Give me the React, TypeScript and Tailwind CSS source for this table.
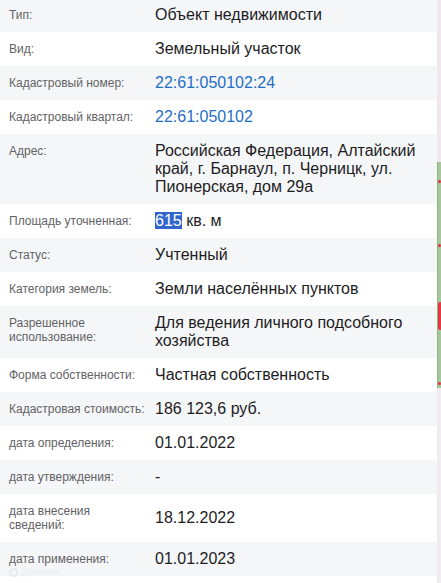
import type { ReactNode } from 'react'

type Row = {
  label: string
  value: ReactNode
}

const ROWS: Row[] = [
  { label: 'Тип:', value: 'Объект недвижимости' },
  { label: 'Вид:', value: 'Земельный участок' },
  {
    label: 'Кадастровый номер:',
    value: <span className="text-[#1f6fc5]">22:61:050102:24</span>,
  },
  {
    label: 'Кадастровый квартал:',
    value: <span className="text-[#1f6fc5]">22:61:050102</span>,
  },
  {
    label: 'Адрес:',
    value: 'Российская Федерация, Алтайский край, г. Барнаул, п. Черницк, ул. Пионерская, дом 29а',
  },
  {
    label: 'Площадь уточненная:',
    value: (
      <>
        <span className="bg-[#3366cc] text-white">615</span> кв. м
      </>
    ),
  },
  { label: 'Статус:', value: 'Учтенный' },
  { label: 'Категория земель:', value: 'Земли населённых пунктов' },
  { label: 'Разрешенное использование:', value: 'Для ведения личного подсобного хозяйства' },
  { label: 'Форма собственности:', value: 'Частная собственность' },
  { label: 'Кадастровая стоимость:', value: '186 123,6 руб.' },
  { label: 'дата определения:', value: '01.01.2022' },
  { label: 'дата утверждения:', value: '-' },
  { label: 'дата внесения сведений:', value: '18.12.2022' },
  { label: 'дата применения:', value: '01.01.2023' },
]

function MapStrip() {
  return (
    <div className="w-[4px] shrink-0 flex flex-col">
      <div className="h-[162px] bg-[#efe9ee]" />
      <div className="relative h-[226px] bg-[#a8c79c] border-l border-[#8fb487]">
        <span className="absolute left-0 top-[18px] w-[3px] h-[3px] rounded-full bg-[#e0303a]" />
        <span className="absolute left-0 top-[82px] w-[3px] h-[3px] rounded-full bg-[#e0303a]" />
        <span className="absolute left-0 top-[140px] w-[4px] h-[28px] rounded-sm bg-[#e33a42]" />
        <span className="absolute left-0 top-[220px] w-[3px] h-[3px] rounded-full bg-[#e0303a]" />
      </div>
      <div className="flex-1 bg-[#f1ecf0]" />
    </div>
  )
}

export default function App() {
  return (
    <div
      className="w-[441px] h-[583px] overflow-hidden bg-white flex"
      style={{ fontFamily: '"Liberation Sans", Arial, sans-serif' }}
    >
      <div className="relative w-[437px] shrink-0 -mt-[2px]">
        {ROWS.map((row, i) => (
          <div
            key={row.label}
            className={`flex ${i % 2 === 0 ? 'bg-[#f5f6f8]' : 'bg-white'}`}
          >
            <div className="w-[155px] shrink-0 self-start pl-[9px] pr-[8px] py-[10px] text-[12px] leading-[14px] text-[#626366]">
              {row.label}
            </div>
            <div className="flex-1 self-center py-[8px] pr-[12px] text-[16px] leading-[18px] text-[#1d1d1f]">
              {row.value}
            </div>
          </div>
        ))}
        {/* faint watermark */}
        <div className="absolute left-[9px] top-[569px] flex items-center gap-[3px] text-[10px] leading-[10px] text-[#eceef1] pointer-events-none">
          <span className="w-[9px] h-[9px] rounded-full border-2 border-[#e8eaee]" />
          Домклик
        </div>
      </div>
      <MapStrip />
    </div>
  )
}
